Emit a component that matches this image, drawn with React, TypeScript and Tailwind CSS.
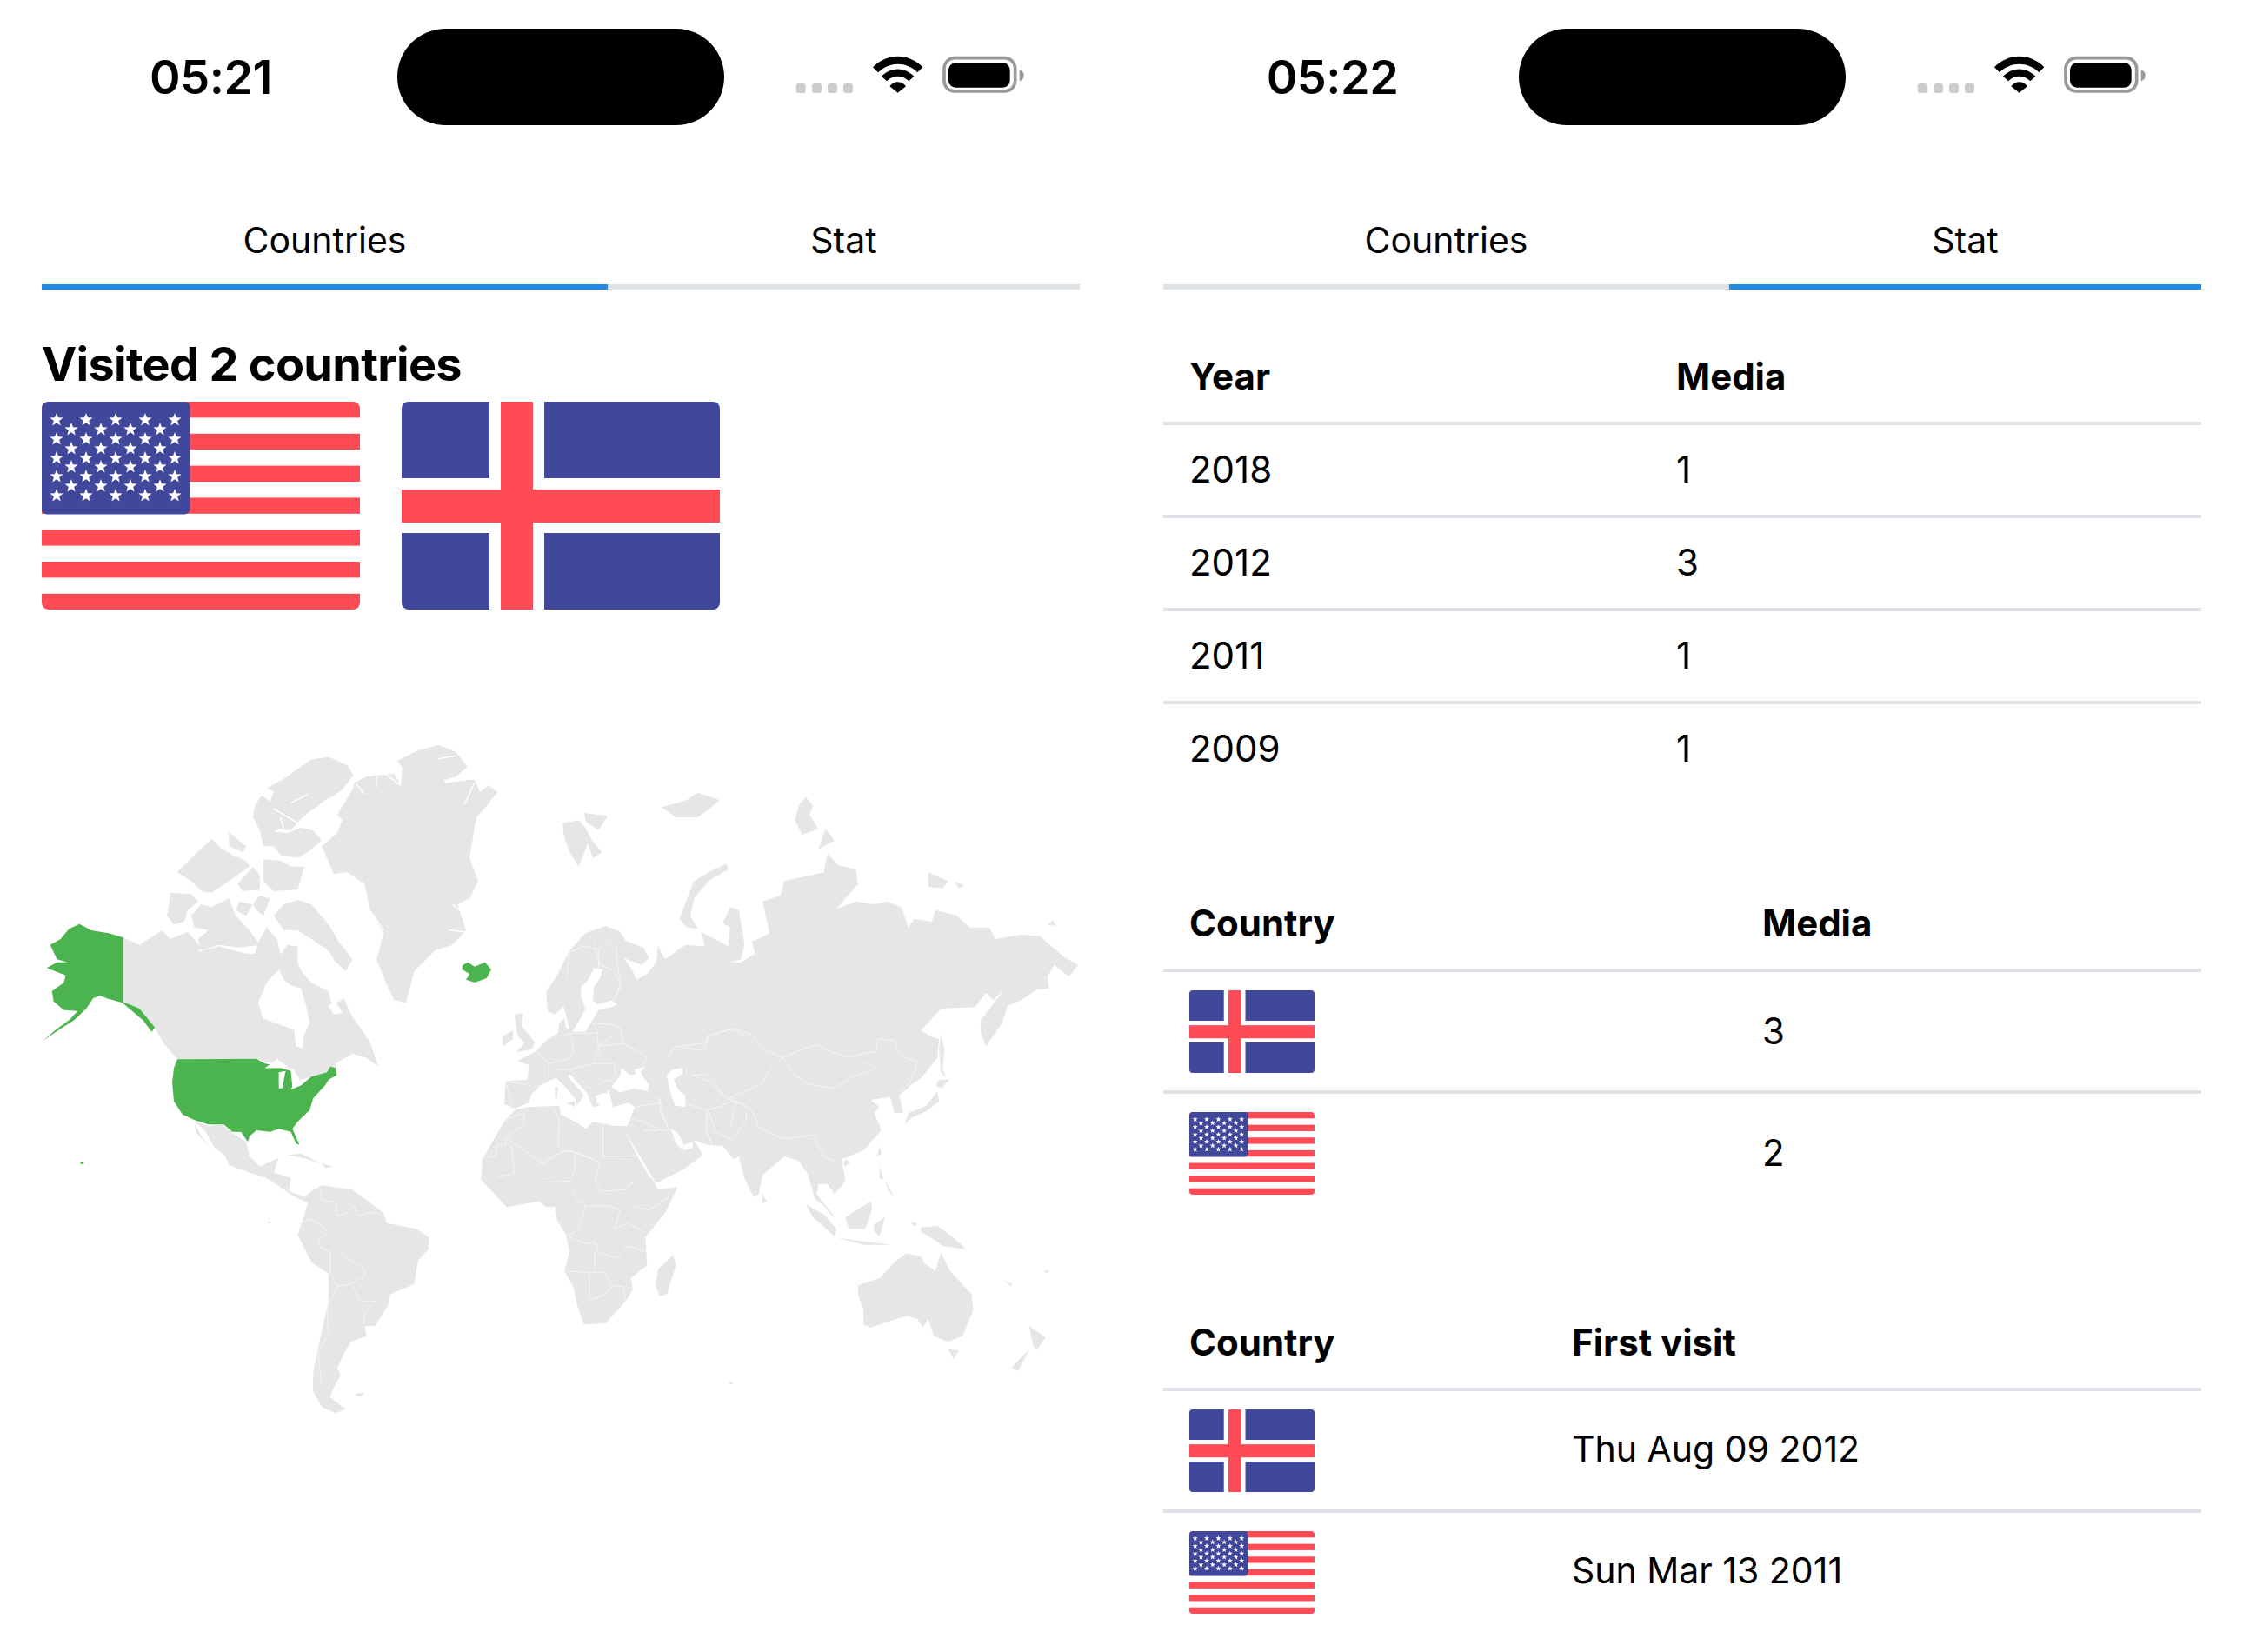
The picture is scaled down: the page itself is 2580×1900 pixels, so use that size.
import React from "react";

const LAND = "#E6E6E6";
const GREEN = "#4CB44E";
const BORDER = "#F5F5F5";

// every map group is traced in its own zoomed coordinates, hence the scale on the <g>
const northAmerica = [
  "1140,70 1200,50 1250,75 1285,125 1250,160 1215,172 1220,182 1280,172 1305,170 1320,212 1345,190 1372,212 1340,260 1310,300 1300,370 1290,440 1315,520 1290,580 1255,600 1280,690 1240,740 1190,760 1130,830 1105,940 1070,930 1050,880 1020,790 1040,700 1000,620 985,530 935,490 895,495 860,400 905,355 920,310 905,290 950,205 955,180 990,160 1020,155 1070,150 1090,190 1095,130 1080,105",
  "700,200 745,170 770,150 800,125 830,100 880,92 935,120 952,155 920,205 895,225 870,240 850,260 825,280 800,305 770,345 735,340 700,365 680,345 660,300 665,260 685,225 710,245 720,210",
  "680,345 760,355 800,335 835,345 860,380 820,420 790,440 740,430 720,400 690,400",
  "420,560 480,565 500,590 470,620 460,660 430,670 410,640",
  "480,640 510,600 540,610 590,580 610,640 650,690 680,740 620,750 560,740 510,760 500,720 530,690 490,680",
  "750,600 790,585 830,600 880,670 910,730 950,790 930,830 900,800 880,760 830,720 790,690 750,690 720,640",
  "440,490 490,430 540,375 570,410 600,430 640,450 650,470 590,520 540,560 510,555 480,520",
  "590,350 640,400 630,420 590,400",
  "660,470 680,500 680,550 630,555 615,530",
  "690,445 740,450 770,470 810,470 800,510 790,550 720,555 690,520",
  "680,570 710,580 690,640 670,620 660,600",
  "620,590 660,600 640,640 610,620",
  "283,715 330,740 395,690 420,720 470,695 510,750 500,765 560,745 640,770 665,770 680,720 700,680 730,720 740,775 760,740 790,745 790,800 800,830 830,870 880,900 890,950 925,925 945,980 980,1040 1000,1075 1025,1160 990,1130 950,1115 900,1150 905,1190 885,1160 875,1180 790,1210 780,1170 720,1150 670,1133 440,1135 400,1080 375,1025 330,960 283,938",
];

const naWater = [
  "735,825 700,870 675,940 690,995 750,1020 780,1035 785,1090 805,1098 808,1050 825,1010 815,950 800,890 770,880 750,860",
  "880,950 900,935 920,975 895,980",
];

const naFjords = [
  "1200,98 1250,88",
  "1220,175 1280,172",
  "1275,255 1305,180",
  "960,185 985,220",
  "1020,155 1018,195",
  "1040,145 1090,190",
  "1240,600 1280,640",
  "1230,690 1280,695",
  "1000,620 1040,690",
  "720,270 790,320",
  "770,250 820,220",
  "740,300 750,340",
];

const alaska =
  "155,668 190,690 240,700 283,715 283,938 300,945 330,960 375,1025 365,1040 340,1000 300,960 280,940 235,925 215,915 195,925 175,960 140,1000 100,1030 50,1070 90,1030 125,1000 150,968 110,965 80,935 75,900 110,870 115,845 60,820 90,800 120,800 90,790 70,740 100,720 125,685";
const usa =
  "440,1135 670,1133 695,1150 720,1155 695,1165 740,1165 770,1175 780,1215 770,1240 800,1225 830,1195 875,1180 885,1160 900,1165 903,1190 880,1205 870,1225 850,1250 835,1270 825,1310 790,1350 775,1375 795,1430 785,1425 770,1385 735,1375 710,1385 670,1380 650,1400 645,1420 625,1385 600,1385 575,1360 530,1360 490,1345 455,1325 430,1280 425,1215 430,1165";
const iceland =
  "1270,810 1285,800 1305,815 1335,800 1353,825 1340,855 1305,870 1280,860 1290,840 1268,825";
const lakes = [
  "695,1165 730,1135 760,1160 735,1165",
  "735,1180 755,1175 745,1235 735,1235",
  "770,1175 790,1190 800,1215 775,1235",
];

const latinAmerica = [
  "490,30 530,45 570,40 600,70 640,100 650,150 680,185 735,155 720,205 770,225 765,270 810,290 830,270 860,250 950,265 1040,345 1050,380 1135,400 1172,430 1170,470 1140,510 1130,590 1060,625 1055,660 1015,735 985,735 990,770 945,790 925,830 905,880 915,905 890,960 885,980 930,1022 900,1035 860,1015 835,960 835,900 855,780 880,650 880,555 830,515 790,420 810,350 820,310 790,295 745,260 700,225 660,210 590,180 580,150 545,115 520,60",
  "490,35 510,80 545,135 520,100 495,70",
  "760,145 800,140 860,175 820,160",
  "860,175 895,185 870,190",
  "955,970 985,965 970,980",
  "700,372 715,378 705,382",
];

const saBorders = [
  "855,260 860,300 900,310 905,355 935,345 955,320",
  "955,320 965,355 990,345 1035,345",
  "790,385 830,365 880,410 850,440 855,465 885,480",
  "885,480 885,550 905,600 945,590 985,560 985,545 960,520 920,490",
  "945,590 975,650 1015,650 985,690 980,730",
  "905,600 875,680 880,760 850,830 860,940",
  "810,410 800,385",
];

const eurasia =
  "185,675 225,695 240,725 290,750 305,785 285,810 235,785 260,830 270,860 300,840 325,800 330,745 350,790 405,740 460,745 450,695 525,745 530,680 510,665 530,610 555,620 565,700 570,740 560,790 530,800 560,800 600,770 590,730 640,700 620,590 670,570 680,520 790,490 800,425 830,465 880,480 885,530 825,615 880,590 930,600 965,590 1005,610 1025,680 1040,650 1090,660 1100,620 1160,640 1195,680 1250,680 1265,720 1340,705 1390,710 1455,780 1495,810 1470,850 1430,810 1410,850 1415,890 1380,895 1340,930 1300,950 1285,1010 1240,1090 1225,1040 1225,1000 1290,895 1260,930 1240,905 1210,955 1115,960 1060,1035 1085,1055 1110,1065 1105,1130 1060,1200 1035,1220 1000,1260 1010,1320 985,1320 975,1265 920,1275 945,1300 930,1320 950,1380 900,1450 860,1470 840,1480 850,1555 820,1600 800,1565 775,1565 770,1600 815,1670 820,1685 790,1640 765,1615 745,1530 720,1485 680,1470 620,1535 610,1600 595,1610 570,1545 555,1470 540,1480 510,1435 470,1430 430,1415 455,1465 400,1515 330,1560 320,1555 290,1490 240,1385 265,1300 230,1000 200,730";

const asiaIslands = [
  "65,320 110,310 125,330 150,385 175,420 150,440 135,390 110,470 85,420 70,370",
  "125,285 190,295 165,345 130,315",
  "340,265 385,250 410,240 440,215 500,240 480,265 440,300 380,300",
  "520,460 525,480 470,520 430,580 420,640 440,685 410,680 390,650 405,600 430,520 470,490",
  "740,230 760,260 750,290 775,340 730,360 710,310 720,260",
  "795,340 820,380 775,410",
  "1080,490 1135,520 1120,545 1080,540",
  "1150,520 1180,535 1165,545",
  "1410,670 1425,655 1435,675",
  "1115,1050 1125,1100 1120,1170 1130,1200 1115,1180 1110,1100",
  "1110,1205 1140,1205 1115,1235 1100,1225",
  "1105,1245 1110,1280 1080,1310 1030,1340 1015,1360 1025,1320 1075,1295",
  "850,1480 862,1490 850,1505 845,1495",
];

const asiaBorders = [
  "350,1130 380,1090 460,1080 470,1050 540,1030 590,1050 625,1100 675,1130 720,1105 770,1085 800,1105 860,1130 900,1115 935,1110 940,1065 985,1070 1000,1120 1050,1145 1030,1215 1000,1250",
  "675,1130 705,1185 745,1220 815,1235 870,1195 935,1165 905,1145",
  "675,1130 640,1170 620,1220 530,1265 590,1310 610,1370 680,1410 760,1395",
  "425,1190 470,1210 520,1270 575,1295",
  "410,1290 465,1310 465,1385 480,1430",
  "520,1290 470,1310 490,1385 535,1410 575,1350 575,1320",
  "335,1270 345,1330 365,1385",
  "255,1340 290,1350 350,1385",
  "760,1395 790,1470 830,1490",
  "150,730 170,810 210,830 225,880 200,950",
  "210,1050 165,1090 170,1130",
];

const africa = [
  "-68,-10 -97,30 -157,160 -161,230 -90,325 0,305 20,325 45,325 50,370 75,420 85,480 70,545 95,600 105,660 125,730 185,725 240,650 260,610 255,570 300,525 295,430 350,345 385,255 330,265 320,240 240,65 262,0 250,45 210,45 150,30 130,55 100,30 60,5 56,-25 -32,-20",
  "372,490 380,525 355,625 335,632 323,595 330,540",
  "618,275 632,305 620,312",
  "885,595 945,570 990,510 1020,485 1060,495 1070,520 1100,545 1115,480 1140,545 1200,625 1205,680 1175,770 1135,790 1095,770 1080,710 1065,740 1050,710 1020,700 970,720 920,740 900,730 900,680 885,625",
  "1135,815 1165,820 1150,850",
  "1360,735 1405,775 1380,820 1370,800",
  "1360,815 1330,890 1310,880",
  "1060,395 1105,390 1145,425 1185,470 1120,460 1100,440 1060,410",
  "850,360 920,305 925,330 905,400 860,400",
  "740,315 790,350 825,400 820,425 760,360",
  "825,430 880,440 980,455 900,455",
  "930,385 960,360 945,425 930,410",
  "945,180 955,230 945,225",
  "960,230 985,290 970,270",
  "945,115 950,140 938,150",
  "1030,378 1050,380 1045,392",
  "1290,575 1312,590 1310,598",
  "1398,548 1415,540 1412,552",
  "527,928 540,930 530,938",
];

const africaBorders = [
  "178,40 178,150 270,148",
  "0,175 70,130 100,135 170,170 155,240 175,270 240,265 260,240 240,255",
  "100,135 100,200 85,235 0,240",
  "95,260 100,295 130,320 190,320 225,335 210,400 245,380 290,410",
  "130,320 110,400 80,425 130,450 155,445 165,480 215,500 245,460 300,480",
  "70,545 130,550 180,550 205,595 235,600 240,650",
  "140,555 140,645 180,630 205,595",
  "250,320 305,335 360,290",
  "155,480 155,545",
];

const europe = [
  "470,15 400,40 345,100 300,190 265,240 270,310 295,320 325,290 330,330 310,350 305,385 265,410 225,450 165,480 205,495 200,545 125,550 120,630 155,645 205,625 215,595 245,565 275,550 300,540 330,570 365,610 370,635 395,600 340,535 345,525 405,590 425,640 445,635 460,620 480,580 485,595 495,640 550,625 570,640 560,700 800,700 800,560 640,560 600,450 520,250 530,130 520,40",
  "155,320 185,315 180,360 225,415 215,440 160,450 190,420 165,390",
  "115,395 150,375 150,405 115,430",
  "295,570 305,570 302,610 295,610",
  "335,625 365,620 362,640",
];

const europeWater = [
  "430,160 460,165 450,195 430,225 425,270 440,285 490,272 510,285 490,295 445,305 425,340 400,380 355,380 385,330 400,300 385,260 385,225 410,200",
  "490,570 520,530 525,505 555,530 575,525 570,510 605,500 590,520 620,565 615,585 570,575 520,590",
  "680,530 700,510 735,505 735,525 705,545 720,580 745,600 745,640 710,635 695,595",
  "695,715 720,730 740,770 770,760 770,780 745,790 715,770",
  "535,720 555,755 600,830 640,895 620,880 580,810",
  "320,300 335,370 345,370 330,310",
  "435,600 470,590 480,600 460,640 440,625",
];

const europeBorders = [
  "445,95 445,160",
  "335,195 345,105 395,85 445,95 495,50",
  "505,80 510,150 525,225 495,270",
  "270,405 350,385 440,385 445,430 530,420 605,460 610,480 590,500",
  "350,385 360,450 340,475 275,490 275,540",
  "445,430 430,490 345,510 300,510",
  "430,490 500,490 505,530",
  "345,510 410,570 430,580",
  "450,560 480,545 500,560",
  "490,355 425,350 445,385",
  "530,420 520,365 490,355",
  "210,565 125,550 145,630",
  "650,600 660,660 690,720",
  "570,640 660,625",
  "820,400 900,370 960,400",
  "680,480 710,430 810,445 825,400",
  "770,530 820,525 880,600 930,630",
  "820,650 815,720 840,770",
  "880,630 920,620 900,710",
  "600,720 680,720 740,800",
  "230,450 280,490",
  "125,680 190,660 185,700 125,745 125,770 95,770 90,810 40,815",
  "125,745 255,835 330,790 360,795 450,830",
  "145,775 155,870 95,880",
  "290,640 310,685 305,775 330,790",
  "460,700 460,810 570,808",
];

const Poly = ({ items, fill }: { items: string[]; fill: string }) => (
  <>
    {items.map((p, i) => (
      <polygon key={i} points={p} fill={fill} />
    ))}
  </>
);

const Lines = ({ items, color = BORDER, width = 1 }: { items: string[]; color?: string; width?: number }) => (
  <>
    {items.map((p, i) => (
      <polyline key={i} points={p} fill="none" stroke={color} strokeWidth={width} vectorEffect="non-scaling-stroke" />
    ))}
  </>
);

const WorldMap = () => (
  <svg viewBox="48 850 1195 790" className="block w-[1195px] h-[790px]">
    <g transform="translate(30 840) scale(0.39541 0.33333)">
      <Poly items={northAmerica} fill={LAND} />
      <Poly items={naWater} fill="#fff" />
      <Lines items={naFjords} color="#fff" width={1.5} />
    </g>
    <g transform="translate(30 1280) scale(0.39541 0.33333)">
      <Poly items={latinAmerica} fill={LAND} />
      <Lines items={saBorders} />
    </g>
    <g transform="translate(620 840) scale(0.41459 0.33333)">
      <polygon points={eurasia} fill={LAND} />
      <Poly items={asiaIslands} fill={LAND} />
    </g>
    <g transform="translate(620 1280) scale(0.41459 0.33333)">
      <Poly items={africa} fill={LAND} />
      <Lines items={africaBorders} />
    </g>
    <g transform="translate(540 1060) scale(0.33333)">
      <Poly items={europe} fill={LAND} />
      <Poly items={europeWater} fill="#fff" />
      <Lines items={europeBorders} />
    </g>
    <g transform="translate(620 840) scale(0.41459 0.33333)">
      <Lines items={asiaBorders} />
    </g>
    <g transform="translate(30 840) scale(0.39541 0.33333)">
      <polygon points={alaska} fill={GREEN} />
      <polygon points={usa} fill={GREEN} />
      <polygon points={iceland} fill={GREEN} />
      <Poly items={lakes} fill="#fff" />
      <circle cx="163" cy="1492" r="5" fill={GREEN} />
    </g>
  </svg>
);

const star = (cx: number, cy: number, r: number) => {
  const pts: string[] = [];
  for (let i = 0; i < 10; i++) {
    const rad = i % 2 === 0 ? r : r * 0.42;
    const a = (Math.PI / 5) * i - Math.PI / 2;
    pts.push(`${cx + rad * Math.cos(a)},${cy + rad * Math.sin(a)}`);
  }
  return pts.join(" ");
};

const UsFlag = ({ className }: { className: string }) => {
  const rowsA = [21, 43, 65, 86, 108];
  const rowsB = [32, 54, 75, 97];
  const colsA = [17, 51, 85, 119, 153];
  const colsB = [34, 68, 102, 136];
  return (
    <svg viewBox="0 0 366 239" preserveAspectRatio="none" className={className}>
      <rect width="366" height="239" fill="#fff" />
      {[0, 1, 2, 3, 4, 5, 6].map((i) => (
        <rect key={i} y={i * 36.8} width="366" height="18.4" fill="#FF4B55" />
      ))}
      <rect width="170.5" height="129.5" rx="6" fill="#41479B" />
      {rowsA.map((y) => colsA.map((x) => <polygon key={`${x}-${y}`} points={star(x, y, 8)} fill="#fff" />))}
      {rowsB.map((y) => colsB.map((x) => <polygon key={`${x}-${y}`} points={star(x, y, 8)} fill="#fff" />))}
    </svg>
  );
};

const IsFlag = ({ className }: { className: string }) => (
  <svg viewBox="0 0 366 239" preserveAspectRatio="none" className={className}>
    <rect width="366" height="239" fill="#41479B" />
    <rect x="101" width="63" height="239" fill="#fff" />
    <rect y="88" width="366" height="63" fill="#fff" />
    <rect x="114" width="37" height="239" fill="#FF4B55" />
    <rect y="101" width="366" height="38" fill="#FF4B55" />
  </svg>
);

const StatusBar = ({ time }: { time: string }) => (
  <div className="flex items-center pt-[33px]">
    <div className="w-[457px] pl-[28px] text-center text-[54px] font-semibold tracking-[-0.5px] text-black">{time}</div>
    <div className="w-[376px] h-[111px] rounded-[56px] bg-black" />
    <svg viewBox="0 0 900 300" className="ml-[67px] w-[300px] h-[100px] mt-[2px]">
      <rect x="47" y="168" width="33" height="33" rx="10" fill="#CCCCCC" />
      <rect x="102" y="168" width="33" height="33" rx="10" fill="#CCCCCC" />
      <rect x="156" y="168" width="33" height="33" rx="10" fill="#CCCCCC" />
      <rect x="210" y="168" width="33" height="33" rx="10" fill="#CCCCCC" />
      <path d="M312 112C360 62 436 62 484 112L466 130C428 92 368 92 330 130Z" fill="#000" />
      <path d="M342 143C375 110 421 110 454 143L436 160C412 138 384 138 360 160Z" fill="#000" />
      <path d="M370 178C385 158 411 158 426 178L398 200Z" fill="#000" />
      <rect x="558" y="80" width="245" height="115" rx="36" fill="none" stroke="#999999" strokeWidth="11" />
      <rect x="573" y="97" width="212" height="85" rx="24" fill="#000" />
      <path d="M818 120C830 125 833 132 833 140C833 148 830 155 818 160Z" fill="#999999" />
    </svg>
  </div>
);

const Tabs = ({ active }: { active: number }) => (
  <div className="flex mt-[89px] mx-[48px] text-[41px] text-black">
    <div className={`w-[651px] h-[100px] pb-[6px] flex items-center justify-center border-b-[6px] ${active === 0 ? "border-[#228BE6]" : "border-[#DEE2E6]"}`}>
      Countries
    </div>
    <div className={`w-[543px] h-[100px] pb-[6px] flex items-center justify-center border-b-[6px] ${active === 1 ? "border-[#228BE6]" : "border-[#DEE2E6]"}`}>
      Stat
    </div>
  </div>
);

const Row = ({ first, second, col, head, rowH, last, date }: { first: React.ReactNode; second: string; col: string; head?: boolean; rowH: string; last?: boolean; date?: boolean }) => (
  <div className={`flex items-center pl-[30px] border-b-[4px] ${rowH} ${last ? "border-transparent" : "border-[#DEE2E6]"} ${head ? "font-bold" : ""}`}>
    <div className={`${col} ${typeof first === "string" && !head ? "pb-[2px]" : ""}`}>{first}</div>
    <div className={`${head ? "" : "pb-[2px]"} ${date ? "text-[41px]" : ""}`}>{second}</div>
  </div>
);

const SmallUs = () => <UsFlag className="block w-[144px] h-[95px] rounded-[4px]" />;
const SmallIs = () => <IsFlag className="block w-[144px] h-[95px] rounded-[4px]" />;

const CountriesPanel = () => (
  <div className="w-[1290px]">
    <StatusBar time="05:21" />
    <Tabs active={0} />
    <div className="px-[48px]">
      <h2 className="mt-[54px] text-[54px] leading-[64px] font-bold tracking-[-0.7px] text-black">Visited 2 countries</h2>
      <div className="flex gap-[48px] mt-[11px]">
        <UsFlag className="block w-[366px] h-[239px] rounded-[8px]" />
        <IsFlag className="block w-[366px] h-[239px] rounded-[8px]" />
      </div>
      <div className="mt-[149px]">
        <WorldMap />
      </div>
    </div>
  </div>
);

const StatPanel = () => (
  <div className="w-[1290px]">
    <StatusBar time="05:22" />
    <Tabs active={1} />
    <div className="mx-[48px] text-[42px] text-black">
      <div className="mt-[47px]">
        <Row head first="Year" second="Media" col="w-[560px]" rowH="h-[109px]" />
        <Row first="2018" second="1" col="w-[560px]" rowH="h-[107px]" />
        <Row first="2012" second="3" col="w-[560px]" rowH="h-[107px]" />
        <Row first="2011" second="1" col="w-[560px]" rowH="h-[107px]" />
        <Row last first="2009" second="1" col="w-[560px]" rowH="h-[107px]" />
      </div>
      <div className="mt-[92px]">
        <Row head first="Country" second="Media" col="w-[659px]" rowH="h-[109px]" />
        <Row first={<SmallIs />} second="3" col="w-[659px]" rowH="h-[140px]" />
        <Row last first={<SmallUs />} second="2" col="w-[659px]" rowH="h-[140px]" />
      </div>
      <div className="mt-[93px]">
        <Row head first="Country" second="First visit" col="w-[440px]" rowH="h-[109px]" />
        <Row date first={<SmallIs />} second="Thu Aug 09 2012" col="w-[440px]" rowH="h-[140px]" />
        <Row date last first={<SmallUs />} second="Sun Mar 13 2011" col="w-[440px]" rowH="h-[140px]" />
      </div>
    </div>
  </div>
);

export default function App() {
  return (
    <div className="flex w-[2580px] h-[1900px] bg-white font-[family-name:Inter] overflow-hidden">
      <CountriesPanel />
      <StatPanel />
    </div>
  );
}
